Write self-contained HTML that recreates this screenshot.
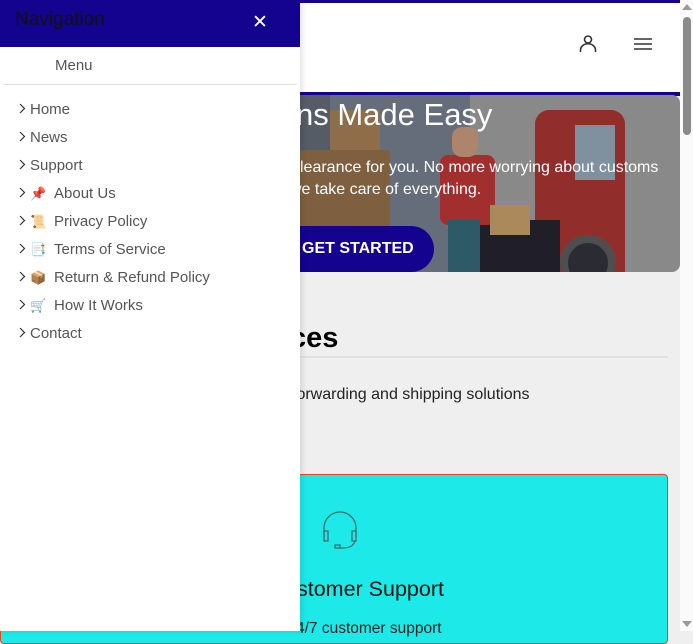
<!DOCTYPE html>
<html><head><meta charset="utf-8">
<style>
*{box-sizing:border-box;margin:0;padding:0}
html,body{width:693px;height:631px;overflow:hidden;font-family:"Liberation Sans","DejaVu Sans",sans-serif;background:#efefef}
.abs{position:absolute}
#drawer{position:absolute;left:0;top:0;width:300px;height:631px;background:#fff;z-index:10;box-shadow:2px 0 6px rgba(0,0,0,.12)}
#dh{height:47px;background:#14038f;position:relative}
#dh .t{position:absolute;left:15px;top:9px;font-size:19px;color:#111}
#dh .x{position:absolute;left:252px;top:11px;color:#fff;font-size:19px;font-weight:bold}
.menu{position:absolute;left:55px;top:57px;font-size:15px;color:#555}
.hr{position:absolute;left:3px;top:84px;width:294px;height:1px;background:#e2e2e2}
.it{position:absolute;left:18px;font-size:15px;color:#555;white-space:nowrap}
.it svg{display:inline-block;vertical-align:0px;margin-right:4px}
.it .e{font-size:13px;margin-right:7px;display:inline-block;width:17px}
</style></head><body>
<div class="abs" style="left:0;top:0;width:680px;height:3px;background:#14038f"></div>
<div class="abs" style="left:0;top:3px;width:680px;height:89px;background:#fff"></div>
<svg class="abs" style="left:578px;top:34px" width="20" height="20" viewBox="0 0 20 20" fill="none" stroke="#333" stroke-width="1.6"><circle cx="10" cy="5.5" r="3.5"/><path d="M2.5 18v-2a6 5 0 0 1 15 0v2"/></svg>
<svg class="abs" style="left:634px;top:37px" width="18" height="14" viewBox="0 0 18 14" stroke="#333" stroke-width="1.6"><path d="M0 2h18M0 7h18M0 12h18"/></svg>
<div class="abs" style="left:0;top:92px;width:680px;height:4px;background:#14038f"></div>
<div class="abs" style="left:0;top:95px;width:680px;height:177px;background:#9b9b9b;border-radius:0 8px 8px 0;overflow:hidden">
 <div class="abs" style="left:300px;top:0;width:170px;height:177px;background:#6f7a86"></div>
 <div class="abs" style="left:300px;top:0;width:30px;height:177px;background:#5d6570"></div>
 <div class="abs" style="left:330px;top:15px;width:50px;height:162px;background:#a37a4e"></div>
 <div class="abs" style="left:300px;top:55px;width:90px;height:122px;background:#8e6a44"></div>
 <div class="abs" style="left:535px;top:15px;width:90px;height:162px;background:#a4302c;border-radius:14px 14px 0 0"></div>
 <div class="abs" style="left:575px;top:30px;width:40px;height:55px;background:#8fa3b3"></div>
 <div class="abs" style="left:470px;top:125px;width:90px;height:52px;background:#1f1d28"></div>
 <div class="abs" style="left:560px;top:140px;width:56px;height:56px;border-radius:50%;background:#2c2c35;border:8px solid #555"></div>
 <div class="abs" style="left:440px;top:60px;width:55px;height:70px;background:#b8302e;border-radius:8px"></div>
 <div class="abs" style="left:448px;top:125px;width:32px;height:52px;background:#2f6270"></div>
 <div class="abs" style="left:452px;top:32px;width:26px;height:30px;background:#c59477;border-radius:10px"></div>
 <div class="abs" style="left:490px;top:110px;width:40px;height:30px;background:#c39a62"></div>
 <div class="abs" style="left:0;top:0;width:680px;height:177px;background:rgba(40,40,50,.15)"></div>
</div>
<div class="abs" style="left:296px;top:97px;font-size:31px;color:#fff;white-space:nowrap">ns Made Easy</div>
<div class="abs" style="left:292px;top:159px;font-size:16px;color:#fff;white-space:nowrap">clearance for you. No more worrying about customs</div>
<div class="abs" style="left:290px;top:181px;font-size:16px;color:#fff;white-space:nowrap">we take care of everything.</div>
<div class="abs" style="left:200px;top:226px;width:234px;height:46px;background:#14038f;border-radius:0 23px 23px 0"></div>
<div class="abs" style="left:302px;top:240px;font-size:16px;font-weight:bold;color:#fff">GET STARTED</div>
<div class="abs" style="left:290px;top:322px;font-size:29px;font-weight:bold;color:#000">ces</div>
<div class="abs" style="left:0;top:356px;width:668px;height:2px;background:#e0e0e0"></div>
<div class="abs" style="left:292px;top:386px;font-size:16px;color:#222;white-space:nowrap">forwarding and shipping solutions</div>
<div class="abs" style="left:0;top:474px;width:668px;height:170px;background:#1de9e9;border:1px solid #e5461e;border-radius:4px"></div>
<svg class="abs" style="left:321px;top:509px" width="38" height="40" viewBox="0 0 38 40" fill="none" stroke="#3f6d70" stroke-width="1.3"><path d="M3 28V19a16 16 0 0 1 32 0v9"/><path d="M3 22h4v10H3zM31 22h4v10h-4z"/><path d="M34 32q-2 7-12 7h-4"/><rect x="14" y="36" width="5" height="3"/></svg>
<div class="abs" style="left:297px;top:577px;font-size:21.5px;color:#111;white-space:nowrap">stomer Support</div>
<div class="abs" style="left:296px;top:620px;font-size:15.5px;color:#222;white-space:nowrap">4/7 customer support</div>
<div class="abs" style="left:680px;top:0;width:13px;height:631px;background:#fafafa"></div>
<div class="abs" style="left:683px;top:17px;width:8px;height:118px;background:#8a8a8a;border-radius:4px"></div>
<div class="abs" style="left:682px;top:4px;width:0;height:0;border-left:5px solid transparent;border-right:5px solid transparent;border-bottom:6px solid #999"></div>
<div class="abs" style="left:682px;top:621px;width:0;height:0;border-left:5px solid transparent;border-right:5px solid transparent;border-top:6px solid #999"></div>
<div id="drawer">
 <div id="dh"><div class="t">Navigation</div><div class="x">✕</div></div>
 <div class="menu">Menu</div>
 <div class="hr"></div>
 <div class="it" style="top:101px"><svg width="8" height="11" viewBox="0 0 8 11"><path d="M2 1l4.5 4.5L2 10" fill="none" stroke="#333" stroke-width="1.2"/></svg>Home</div>
 <div class="it" style="top:129px"><svg width="8" height="11" viewBox="0 0 8 11"><path d="M2 1l4.5 4.5L2 10" fill="none" stroke="#333" stroke-width="1.2"/></svg>News</div>
 <div class="it" style="top:157px"><svg width="8" height="11" viewBox="0 0 8 11"><path d="M2 1l4.5 4.5L2 10" fill="none" stroke="#333" stroke-width="1.2"/></svg>Support</div>
 <div class="it" style="top:185px"><svg width="8" height="11" viewBox="0 0 8 11"><path d="M2 1l4.5 4.5L2 10" fill="none" stroke="#333" stroke-width="1.2"/></svg><span class="e">📌</span>About Us</div>
 <div class="it" style="top:213px"><svg width="8" height="11" viewBox="0 0 8 11"><path d="M2 1l4.5 4.5L2 10" fill="none" stroke="#333" stroke-width="1.2"/></svg><span class="e">📜</span>Privacy Policy</div>
 <div class="it" style="top:241px"><svg width="8" height="11" viewBox="0 0 8 11"><path d="M2 1l4.5 4.5L2 10" fill="none" stroke="#333" stroke-width="1.2"/></svg><span class="e">📑</span>Terms of Service</div>
 <div class="it" style="top:269px"><svg width="8" height="11" viewBox="0 0 8 11"><path d="M2 1l4.5 4.5L2 10" fill="none" stroke="#333" stroke-width="1.2"/></svg><span class="e">📦</span>Return &amp; Refund Policy</div>
 <div class="it" style="top:297px"><svg width="8" height="11" viewBox="0 0 8 11"><path d="M2 1l4.5 4.5L2 10" fill="none" stroke="#333" stroke-width="1.2"/></svg><span class="e">🛒</span>How It Works</div>
 <div class="it" style="top:325px"><svg width="8" height="11" viewBox="0 0 8 11"><path d="M2 1l4.5 4.5L2 10" fill="none" stroke="#333" stroke-width="1.2"/></svg>Contact</div>
</div>
</body></html>
